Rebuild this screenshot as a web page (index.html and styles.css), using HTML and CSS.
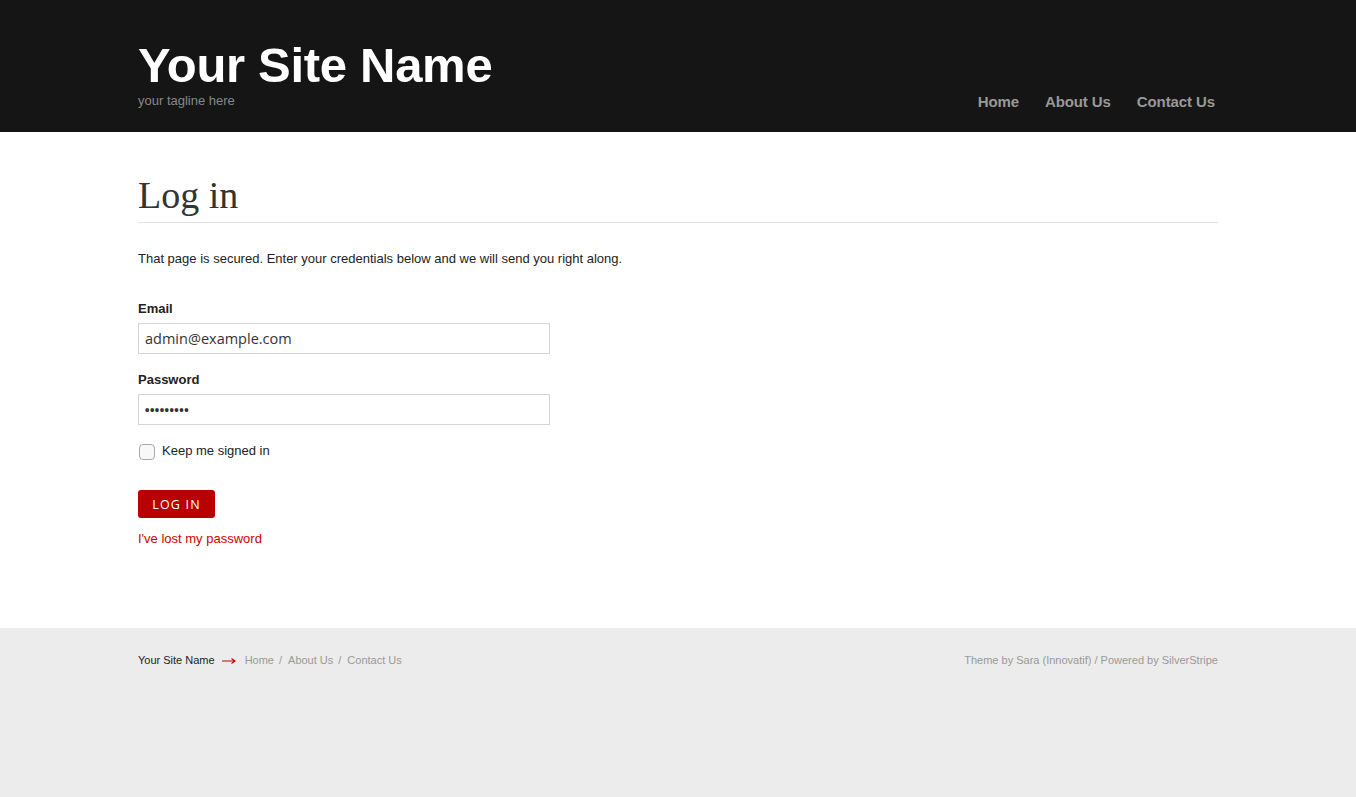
FILE: index.html
```html
<!DOCTYPE html>
<html>
<head>
<meta charset="utf-8">
<title>Log in</title>
<link rel="stylesheet" href="styles.css">
</head>
<body>
<header class="header">
  <div class="container header-inner">
    <div class="brand">
      <h1 class="site-name">Your Site Name</h1>
      <p class="tagline">your tagline here</p>
    </div>
    <nav class="nav">
      <a href="#">Home</a>
      <a href="#">About Us</a>
      <a href="#">Contact Us</a>
    </nav>
  </div>
</header>
<main class="main">
  <div class="container">
    <h2 class="page-title">Log in</h2>
    <p class="intro">That page is secured. Enter your credentials below and we will send you right along.</p>
    <form class="form">
      <div class="field">
        <label class="label">Email</label>
        <div class="input">admin@example.com</div>
      </div>
      <div class="field">
        <label class="label">Password</label>
        <div class="input password">•••••••••</div>
      </div>
      <div class="check-row">
        <span class="checkbox"></span>
        <span class="check-label">Keep me signed in</span>
      </div>
      <div class="actions">
        <button type="button" class="btn">LOG IN</button>
      </div>
      <a href="#" class="lost">I've lost my password</a>
    </form>
  </div>
</main>
<footer class="footer">
  <div class="container footer-inner">
    <div class="footer-left">
      <span class="footer-name">Your Site Name</span>
      <svg class="arrow" width="14" height="8" viewBox="0 0 14 8"><path d="M0 4H12.5M9.5 1.5L13 4L9.5 6.5" fill="none" stroke="#c00" stroke-width="1.1"/></svg>
      <a href="#">Home</a><span class="sep">/</span><a href="#">About Us</a><span class="sep">/</span><a href="#">Contact Us</a>
    </div>
    <div class="footer-right">Theme by <a href="#">Sara (Innovatif)</a> / Powered by <a href="#">SilverStripe</a></div>
  </div>
</footer>
</body>
</html>
```
FILE: styles.css
```css
* { box-sizing: border-box; }
html, body { margin: 0; padding: 0; }
body {
  font-family: "Liberation Sans", Arial, sans-serif;
  color: #333;
  background: #ececec;
  min-height: 797px;
}
.container { width: 1080px; margin: 0 auto; }

.header { background: #151515; height: 132px; }
.header-inner { display: flex; justify-content: space-between; align-items: flex-end; height: 132px; padding-bottom: 21px; }
.brand { padding-bottom: 2px; }
.site-name {
  margin: 0; color: #fff; font-size: 49px; font-weight: bold; line-height: 48px; letter-spacing: -0.3px;
  position: relative; top: -6px;
}
.tagline { margin: -2px 0 0; color: #888; font-size: 13px; line-height: 16px; }
.nav { display: flex; gap: 26px; margin-right: 3px; }
.nav a { color: #999; text-decoration: none; font-weight: bold; font-size: 15px; line-height: 18px; letter-spacing: -0.1px; }

.main { background: #fff; padding-top: 41px; height: 496px; }
.page-title {
  margin: 0; font-family: "Liberation Serif", "DejaVu Serif", serif; font-weight: normal;
  font-size: 38px; line-height: 44px; color: #333; padding-bottom: 5px;
  border-bottom: 1px solid #e3e3e3;
}
.intro { margin: 28px 0 0; font-size: 13px; line-height: 16px; color: #222; }
.form { margin-top: 34px; }
.field { margin-bottom: 18px; }
.label { display: block; font-weight: bold; font-size: 13px; line-height: 16px; color: #222; margin-bottom: 6px; }
.input {
  width: 412px; height: 31px; border: 1px solid #d4d4d4; padding: 0 6px;
  font-family: "Open Sans", "DejaVu Sans", sans-serif; font-size: 14.5px; line-height: 29px; color: #333;
}
.password { font-size: 17px; letter-spacing: -1.5px; padding-left: 5px; }
.check-row { display: flex; align-items: center; gap: 7px; margin-top: 19px; }
.checkbox {
  width: 16px; height: 16px; border: 1px solid #aaa; border-radius: 4px; background: #f8f8f8; margin-left: 1px;
}
.check-label { font-size: 13px; color: #222; line-height: 16px; position: relative; top: -1px; }
.actions { margin-top: 30px; }
.btn {
  background: #b80000; color: #fff; border: 0; border-radius: 3px; height: 28px; width: 77px;
  font-family: "Open Sans", "DejaVu Sans", sans-serif; font-size: 12.5px; letter-spacing: 1.2px; padding: 0; cursor: pointer;
  display: block;
}
.lost { display: block; margin-top: 13px; color: #c00; text-decoration: none; font-size: 13px; line-height: 16px; }

.footer { background: #ececec; padding-top: 25px; }
.footer-inner { display: flex; justify-content: space-between; font-size: 11px; line-height: 14px; }
.footer-left { display: flex; align-items: center; }
.footer-name { color: #222; }
.arrow { margin: 1px 9px 0 7px; }
.footer-left a { color: #999; text-decoration: none; }
.sep { color: #999; margin: 0 5px 0 5px; padding-right: 1px; }
.footer-right { color: #999; }
.footer-right a { color: #999; text-decoration: none; }
```
